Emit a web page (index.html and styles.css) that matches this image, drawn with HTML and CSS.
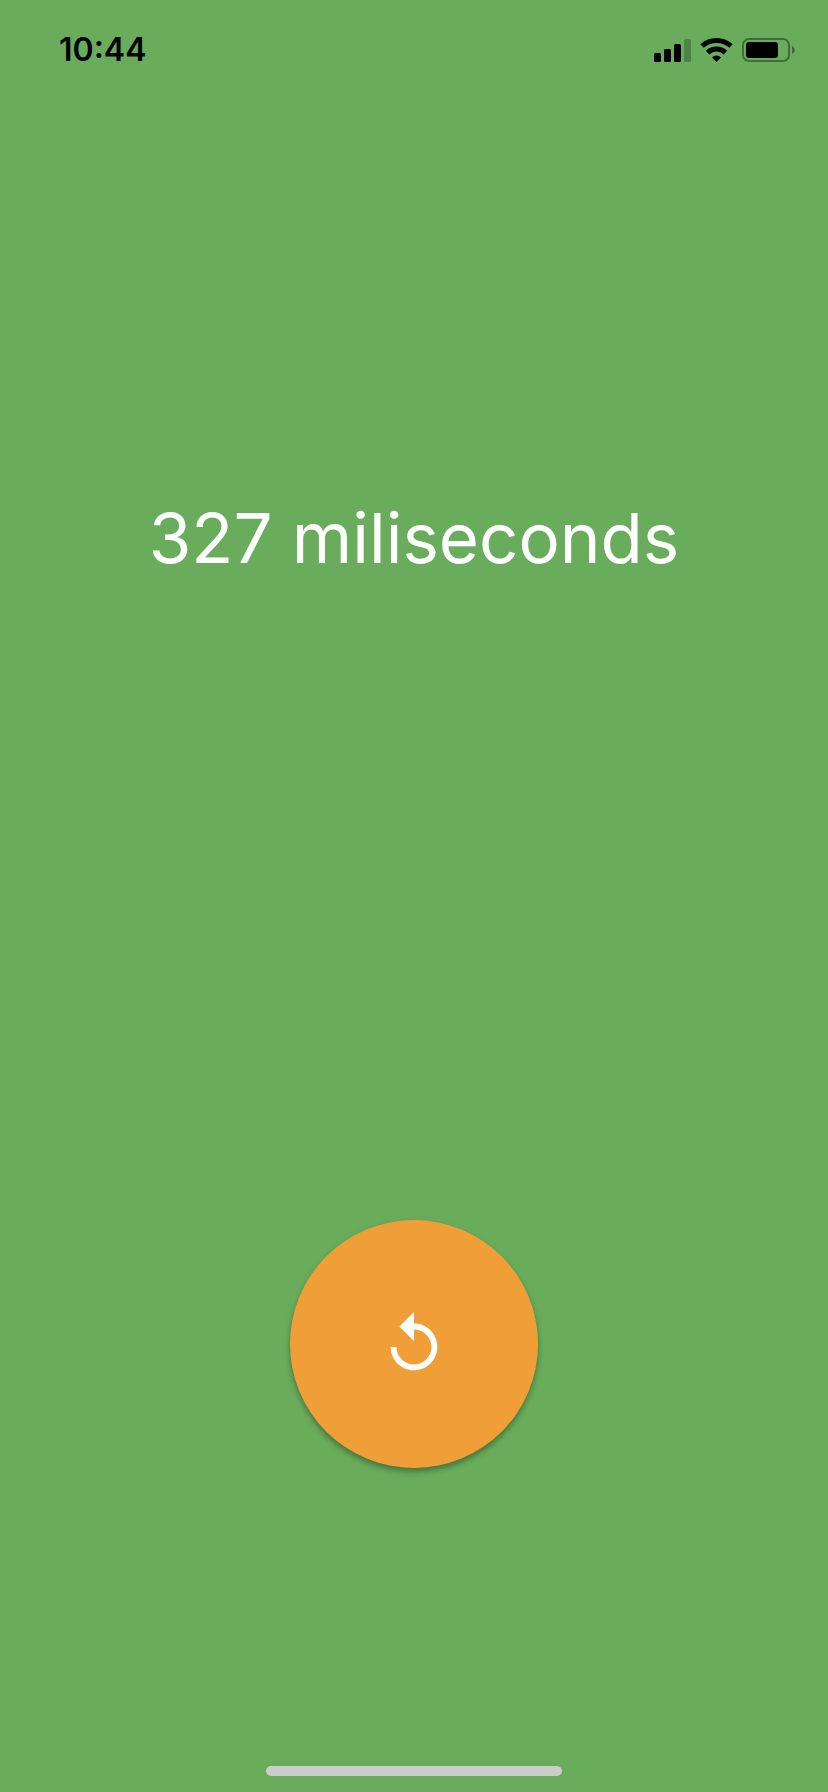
FILE: index.html
```html
<!DOCTYPE html>
<html lang="en">
<head>
<meta charset="utf-8">
<meta name="viewport" content="width=device-width, initial-scale=1">
<title>Reaction time</title>
<link rel="stylesheet" href="styles.css">
</head>
<body>
<main class="screen">
  <section class="half">
    <header class="status-bar">
      <time class="clock">10:44</time>
      <svg class="status-icons" width="144" height="26" viewBox="0 0 144 26" aria-hidden="true">
        <rect x="1" y="16" width="7" height="9" rx="1.5"/>
        <rect x="11" y="12" width="7" height="13" rx="1.5"/>
        <rect x="21" y="7" width="7" height="18" rx="1.5"/>
        <rect x="31" y="2" width="7" height="23" rx="1.5" opacity=".24"/>
        <g fill="none" stroke="#000" stroke-width="5">
          <path d="M49 9a21.600 21.600 0 0 1 29 0"/>
          <path d="M54.600 15.600a13 13 0 0 1 17.800 0"/>
        </g>
        <path d="M63.500 25l-4.500-4.600a6.500 6.500 0 0 1 9 0z"/>
        <rect x="90" y="2" width="46" height="22" rx="6" fill="none" stroke="#000" stroke-opacity=".38" stroke-width="2"/>
        <rect x="93" y="5" width="32" height="16" rx="3"/>
        <path d="M139 9c3.600 1.400 3.600 6.600 0 8z" opacity=".4"/>
      </svg>
    </header>
    <div class="result">
      <h1 class="result-text">327 miliseconds</h1>
    </div>
  </section>
  <section class="half half-action">
    <button class="replay" type="button" aria-label="Try again">
      <svg width="70" height="70" viewBox="0 0 24 24" aria-hidden="true">
        <path fill="#fff" d="M12 5V1L7 6l5 5V7c3.310 0 6 2.690 6 6s-2.690 6-6 6-6-2.690-6-6H4c0 4.420 3.580 8 8 8s8-3.580 8-8-3.580-8-8-8z"/>
      </svg>
    </button>
  </section>
  <div class="home-indicator"></div>
</main>
</body>
</html>
```
FILE: styles.css
```css
* {
  box-sizing: border-box;
}

body {
  margin: 0;
  background: #69ad5c;
  font-family: Inter, "Liberation Sans", sans-serif;
}

.screen {
  display: grid;
  grid-template-rows: 1fr 1fr;
  min-height: 100vh;
}

.half {
  display: flex;
  flex-direction: column;
}

.half-action {
  align-items: center;
  justify-content: center;
}

.status-bar {
  display: flex;
  align-items: center;
  justify-content: space-between;
  height: 99px;
  padding: 0 31px 0 59px;
  color: #000;
}

.clock {
  font-size: 32px;
  font-weight: 600;
  line-height: 40px;
}

.result {
  display: flex;
  flex: 1;
  align-items: center;
  justify-content: center;
  padding-top: 80px;
}

.result-text {
  margin: 0;
  color: #fff;
  font-size: 69px;
  font-weight: 400;
  line-height: 80px;
  text-align: center;
}

.replay {
  display: flex;
  align-items: center;
  justify-content: center;
  width: 248px;
  height: 248px;
  padding: 0;
  border: 0;
  border-radius: 50%;
  background: #f09f38;
  box-shadow: 0 4px 5px rgba(0, 0, 0, 0.24), 0 3px 8px rgba(0, 0, 0, 0.1);
  cursor: pointer;
}

.home-indicator {
  position: fixed;
  bottom: 16px;
  left: 50%;
  width: 296px;
  height: 10px;
  margin-left: -148px;
  border-radius: 5px;
  background: #cccccb;
}
```
